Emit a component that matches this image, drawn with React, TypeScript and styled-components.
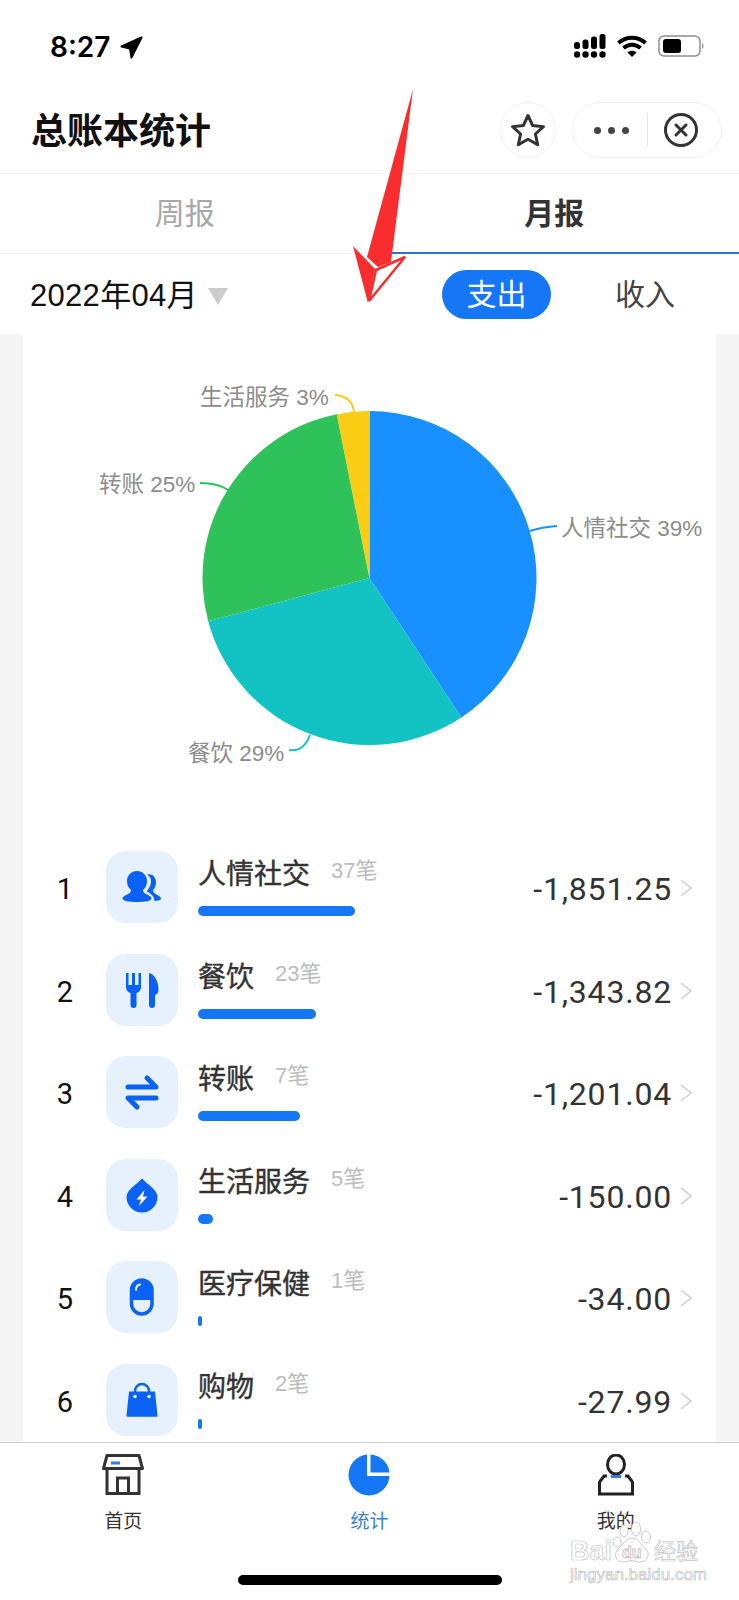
import styled, { createGlobalStyle } from 'styled-components';

const CJK = `"Liberation Sans", "Noto Sans CJK SC", sans-serif`;
const BLUE = '#1677f6';
const ICON_BLUE = '#0a62f5';

const GlobalStyle = createGlobalStyle`
  html, body {
    margin: 0;
    padding: 0;
    background: #fff;
  }
  * {
    box-sizing: border-box;
  }
`;

const Page = styled.div`
  position: relative;
  width: 739px;
  height: 1600px;
  overflow: hidden;
  display: flex;
  flex-direction: column;
  background: #fff;
  font-family: ${CJK};
`;

const StatusBar = styled.div`
  height: 88px;
  flex: none;
  display: flex;
  justify-content: space-between;
  align-items: flex-start;
  padding: 32px 34px 0 50px;
`;

const TimeBox = styled.div`
  display: flex;
  align-items: center;
  gap: 10px;
  height: 30px;
  font-family: Inter, sans-serif;
  font-size: 28px;
  font-weight: 600;
  color: #000;
`;

const StatusIcons = styled.div`
  display: flex;
  align-items: center;
  gap: 11px;
  margin-top: 2px;
`;

const NavBar = styled.div`
  height: 86px;
  flex: none;
  display: flex;
  align-items: flex-start;
  padding: 14px 17px 0 31px;
  border-bottom: 1px solid #f3f3f3;
`;

const Title = styled.div`
  flex: 1;
  margin-top: 2px;
  font-size: 36px;
  line-height: 56px;
  font-weight: 700;
  color: #111;
`;

const RoundButton = styled.div`
  width: 56px;
  height: 56px;
  border-radius: 50%;
  border: 1px solid #f0f0f0;
  display: flex;
  align-items: center;
  justify-content: center;
`;

const Capsule = styled.div`
  width: 150px;
  height: 56px;
  margin-left: 16px;
  border-radius: 28px;
  border: 1px solid #f0f0f0;
  display: flex;
  align-items: center;
`;

const CapsuleDots = styled.div`
  width: 75px;
  height: 34px;
  display: flex;
  align-items: center;
  justify-content: center;
  border-right: 1px solid #e4e4e4;
  gap: 7px;
  padding-left: 2px;
`;

const Dot = styled.span`
  width: 7px;
  height: 7px;
  border-radius: 50%;
  background: #444;
`;

const CapsuleClose = styled.div`
  flex: 1;
  display: flex;
  justify-content: center;
  padding-right: 7px;
`;

const Tabs = styled.div`
  height: 80px;
  flex: none;
  display: flex;
  border-bottom: 1px solid #f3f3f3;
`;

const Tab = styled.div<{ $active?: boolean }>`
  position: relative;
  flex: 1;
  display: flex;
  align-items: center;
  justify-content: center;
  padding-bottom: 6px;
  font-size: 30px;
  font-weight: ${(p) => (p.$active ? 700 : 400)};
  color: ${(p) => (p.$active ? '#333' : '#a8a8a8')};

  ${(p) =>
    p.$active &&
    `&::after {
      content: '';
      position: absolute;
      left: 0;
      right: 0;
      bottom: -1px;
      height: 2px;
      background: #2f73cf;
    }`}
`;

const FilterRow = styled.div`
  height: 80px;
  flex: none;
  display: flex;
  align-items: center;
  padding: 0 64px 0 30px;
`;

const DateLabel = styled.div`
  margin-top: -4px;
  font-size: 31px;
  letter-spacing: 0.3px;
  color: #111;
`;

const Caret = styled.div`
  width: 0;
  height: 0;
  margin: 4px 0 0 10px;
  border-left: 10px solid transparent;
  border-right: 10px solid transparent;
  border-top: 17px solid #cccccc;
`;

const TypeSwitch = styled.div`
  margin-left: auto;
  display: flex;
  align-items: center;
  gap: 64px;
`;

const TypeButton = styled.div<{ $active?: boolean }>`
  width: ${(p) => (p.$active ? '109px' : 'auto')};
  height: 49px;
  padding-bottom: 5px;
  border-radius: 25px;
  display: flex;
  align-items: center;
  justify-content: center;
  font-size: 30px;
  background: ${(p) => (p.$active ? BLUE : 'transparent')};
  color: ${(p) => (p.$active ? '#fff' : '#444')};
`;

const Main = styled.div`
  flex: 1;
  min-height: 0;
  overflow: hidden;
  background: #f5f5f5;
  padding: 0 23px;
`;

const Card = styled.div`
  background: #fff;
  min-height: 100%;
`;

const ChartSvg = styled.svg`
  display: block;
  width: 693px;
  height: 500px;

  text {
    font-family: ${CJK};
    font-size: 22.5px;
    fill: #8c8c8c;
  }
`;

const List = styled.div`
  display: flex;
  flex-direction: column;
  gap: 30.5px;
  padding: 17px 24px 0 25px;
`;

const Row = styled.div`
  display: flex;
  align-items: flex-start;
  height: 72px;
`;

const Rank = styled.div`
  width: 34px;
  line-height: 76px;
  text-align: center;
  font-family: Roboto, sans-serif;
  font-size: 29px;
  color: #111;
`;

const IconTile = styled.div`
  width: 72px;
  height: 72px;
  margin-left: 24px;
  border-radius: 20px;
  background: #e6f1fd;
  display: flex;
`;

const Info = styled.div`
  flex: 1;
  margin-left: 20px;
  padding-top: 1px;
`;

const NameLine = styled.div`
  display: flex;
  align-items: center;
  gap: 21px;
  height: 40px;
`;

const Name = styled.div`
  font-size: 28px;
  font-weight: 400;
  -webkit-text-stroke: 0.4px #333;
  color: #333;
`;

const Count = styled.div`
  margin-top: -8px;
  font-size: 22px;
  color: #bdbdbd;
`;

const Bar = styled.div`
  height: 10px;
  margin-top: 14px;
  border-radius: 5px;
  background: ${BLUE};
`;

const Amount = styled.div`
  line-height: 76px;
  font-family: Roboto, sans-serif;
  font-size: 32px;
  letter-spacing: 0.8px;
  color: #333;
`;

const Chevron = styled.svg`
  width: 12px;
  height: 18px;
  margin: 28px 0 0 8px;
`;

const TabBar = styled.div`
  flex: none;
  height: 158px;
  border-top: 1px solid #cccccc;
  background: #fff;
  display: flex;
  flex-direction: column;
`;

const TabItems = styled.div`
  display: grid;
  grid-template-columns: repeat(3, 1fr);
  padding-top: 11px;
`;

const TabItem = styled.div<{ $active?: boolean }>`
  display: flex;
  flex-direction: column;
  align-items: center;
  font-size: 19px;
  line-height: 26px;
  color: ${(p) => (p.$active ? '#3a7fd5' : '#333')};

  svg {
    display: block;
    width: 44px;
    height: 42px;
    margin-bottom: 13px;
  }
`;

const TabLabel = styled.span`
  display: block;
`;

const HomeIndicator = styled.div`
  width: 264px;
  height: 10px;
  margin-top: 40px;
  align-self: center;
  border-radius: 5px;
  background: #000;
`;

const Annotation = styled.svg`
  position: absolute;
  left: 340px;
  top: 80px;
  width: 80px;
  height: 230px;
  pointer-events: none;
`;

const Watermark = styled.div`
  position: absolute;
  left: 570px;
  top: 1520px;
  width: 130px;
  height: 64px;
  color: #fff;
  -webkit-text-stroke: 0.7px #c4c4c4;
  pointer-events: none;
`;

const WatermarkBai = styled.span`
  position: absolute;
  left: 0;
  top: 18px;
  font-size: 27px;
  line-height: 27px;
  font-weight: 700;
`;

const WatermarkJy = styled.span`
  position: absolute;
  left: 84px;
  top: 20px;
  font-size: 22px;
  line-height: 24px;
  white-space: nowrap;
`;

const WatermarkUrl = styled.span`
  position: absolute;
  left: 0;
  top: 46px;
  font-size: 17px;
  line-height: 17px;
  white-space: nowrap;
`;

const WatermarkPaw = styled.svg`
  position: absolute;
  left: 42px;
  top: 2px;
  width: 40px;
  height: 44px;

  ellipse, path {
    fill: #fff;
    stroke: #c9c9c9;
    stroke-width: 1;
  }
  text {
    font-family: "Liberation Sans", sans-serif;
    font-size: 16px;
    font-weight: 700;
    fill: #fff;
    stroke: #c0c0c0;
    stroke-width: 0.8;
  }
`;

// pie is drawn in page coordinates, viewBox of ChartSvg starts at 23,334
const CX = 369.5;
const CY = 578;
const R = 167;

const point = (deg: number) => {
  const a = (deg * Math.PI) / 180;
  return `${CX + R * Math.sin(a)} ${CY - R * Math.cos(a)}`;
};

const slices = [
  { from: 0, to: 146.6, color: '#1890ff' },
  { from: 146.6, to: 255, color: '#13c2c2' },
  { from: 255, to: 348.7, color: '#2fc25b' },
  { from: 348.7, to: 360, color: '#facc14' },
];

const PeopleIcon = () => (
  <svg width="72" height="72" viewBox="0 0 72 72" fill={ICON_BLUE}>
    <path d="M31 20C25 20 21 24.500 21 30C21 34 22.500 37 25 39C25 41 24 42 21 43.500C18 45 16.500 46 16.500 47.500C16.500 50 23 51 31 51C39 51 45.500 50 45.500 47.500C45.500 46 44 45 41 43.500C38 42 37 41 37 39C39.500 37 41 34 41 30C41 24.500 37 20 31 20Z" />
    <path d="M41 23.500C46 22 50 26 50 31C50 35 48.500 37.500 47 39C47 41 48 42 50.500 43.500C53 45 55 46 55 47.500C55 49 52 50 48.500 50C48.500 46 46 43.500 42 41C41 40.500 41 40 41 39.500C43.500 37 45 34 45 30C45 27 43.500 25 41 23.500Z" />
  </svg>
);

const ForkKnifeIcon = () => (
  <svg width="72" height="72" viewBox="0 0 72 72" fill={ICON_BLUE}>
    <path d="M20 19h2.500v12h3.500V19h3v12h3.500V19H35v14c0 3-2 5.500-4.500 6V51a3 3 0 0 1-6 0V39c-2.500-.5-4.500-3-4.500-6z" />
    <path d="M43 19C49 20 52.500 28 52.500 36C52.500 39 50.500 40.500 49 41V51a3 3 0 0 1-6 0Z" />
  </svg>
);

const TransferIcon = () => (
  <svg width="72" height="72" viewBox="0 0 72 72" fill="none" stroke={ICON_BLUE} strokeWidth="5" strokeLinecap="round" strokeLinejoin="round">
    <path d="M22 31H50L41 22" />
    <path d="M50 42H22L31 51" />
  </svg>
);

const DropIcon = () => (
  <svg width="72" height="72" viewBox="0 0 72 72">
    <path fill={ICON_BLUE} d="M36 19.500C42 26 51.500 31 51.500 38A15.500 15.500 0 0 1 20.500 38C20.500 31 30 26 36 19.500Z" />
    <path fill="#fff" d="M38.500 31L30.500 40.500h4.500l-2 6.500l8.500-9.500h-4.500l1.500-6.500z" />
  </svg>
);

const PillIcon = () => (
  <svg width="72" height="72" viewBox="0 0 72 72">
    <path fill={ICON_BLUE} d="M25.500 39V29.300A10.250 10.250 0 0 1 46 29.300V39Z" />
    <rect x="25.500" y="19" width="20.500" height="34" rx="10.250" fill="none" stroke={ICON_BLUE} strokeWidth="3.500" />
    <path d="M30 29c0-3 1.500-5 4-5.500" fill="none" stroke="#e6f1fd" strokeWidth="2" strokeLinecap="round" />
  </svg>
);

const BagIcon = () => (
  <svg width="72" height="72" viewBox="0 0 72 72">
    <path d="M29 33v-6a7 7 0 0 1 14 0v6" fill="none" stroke={ICON_BLUE} strokeWidth="2.500" />
    <path fill={ICON_BLUE} d="M23 27.500H49L51.500 51.500a1 1 0 0 1-1 1.200H21.500a1 1 0 0 1-1-1.200Z" />
    <circle cx="29" cy="32.500" r="1.800" fill="#e6f1fd" />
    <circle cx="43" cy="32.500" r="1.800" fill="#e6f1fd" />
  </svg>
);

const rows = [
  { name: '人情社交', count: '37笔', amount: '-1,851.25', width: 157, Icon: PeopleIcon },
  { name: '餐饮', count: '23笔', amount: '-1,343.82', width: 118, Icon: ForkKnifeIcon },
  { name: '转账', count: '7笔', amount: '-1,201.04', width: 102, Icon: TransferIcon },
  { name: '生活服务', count: '5笔', amount: '-150.00', width: 15, Icon: DropIcon },
  { name: '医疗保健', count: '1笔', amount: '-34.00', width: 4, Icon: PillIcon },
  { name: '购物', count: '2笔', amount: '-27.99', width: 4, Icon: BagIcon },
];

const SignalIcon = () => (
  <svg width="32" height="24" viewBox="0 0 32 24" fill="#000">
    <rect x="0" y="8" width="6" height="7" rx="2.500" />
    <rect x="8.500" y="5.500" width="6" height="9.500" rx="2.500" />
    <rect x="17" y="2.500" width="6" height="12.500" rx="2.500" />
    <rect x="25.500" y="0" width="6" height="15" rx="2.500" />
    <circle cx="3" cy="20.500" r="3.200" />
    <circle cx="11.500" cy="20.500" r="3.200" />
    <circle cx="20" cy="20.500" r="3.200" />
    <circle cx="28.500" cy="20.500" r="3.200" />
  </svg>
);

const WifiIcon = () => (
  <svg width="30" height="22" viewBox="0 0 30 22" fill="none" stroke="#000" strokeWidth="4">
    <path d="M1.500 8C9 1 21 1 28.500 8" />
    <path d="M6.500 13C11.500 8.500 18.500 8.500 23.500 13" />
    <path d="M15 22L10.500 17.500C13 15 17 15 19.500 17.500Z" fill="#000" stroke="none" />
  </svg>
);

const BatteryIcon = () => (
  <svg width="47" height="22" viewBox="0 0 47 22">
    <rect x="1" y="1" width="41" height="20" rx="5" fill="none" stroke="#8f8f8f" strokeWidth="1.500" />
    <rect x="5" y="4" width="18" height="14" rx="3" fill="#000" />
    <path d="M44 8c2 .5 2 5.500 0 6z" fill="#9a9a9a" />
  </svg>
);

export default function App() {
  return (
    <Page>
      <GlobalStyle />
      <StatusBar>
        <TimeBox>
          8:27
          <svg width="23" height="23" viewBox="0 0 23 23" fill="#000" stroke="#000" strokeWidth="2" strokeLinejoin="round">
            <path d="M21.500 1.500L1.500 10.500L10 12.500L11.500 21.500Z" />
          </svg>
        </TimeBox>
        <StatusIcons>
          <SignalIcon />
          <WifiIcon />
          <BatteryIcon />
        </StatusIcons>
      </StatusBar>

      <NavBar>
        <Title>总账本统计</Title>
        <RoundButton>
          <svg width="36" height="34" viewBox="0 0 36 34" fill="none" stroke="#333" strokeWidth="3" strokeLinejoin="round">
            <path d="M18 2.500L22.600 12.500L33.500 13.700L25.400 21L27.700 31.700L18 26.300L8.300 31.700L10.600 21L2.500 13.700L13.400 12.500Z" />
          </svg>
        </RoundButton>
        <Capsule>
          <CapsuleDots>
            <Dot />
            <Dot />
            <Dot />
          </CapsuleDots>
          <CapsuleClose>
            <svg width="36" height="36" viewBox="0 0 36 36" fill="none" stroke="#333">
              <circle cx="18" cy="18" r="15.500" strokeWidth="3" />
              <path d="M13 13L23 23M23 13L13 23" strokeWidth="3" strokeLinecap="round" />
            </svg>
          </CapsuleClose>
        </Capsule>
      </NavBar>

      <Tabs>
        <Tab>周报</Tab>
        <Tab $active>月报</Tab>
      </Tabs>

      <FilterRow>
        <DateLabel>2022年04月</DateLabel>
        <Caret />
        <TypeSwitch>
          <TypeButton $active>支出</TypeButton>
          <TypeButton>收入</TypeButton>
        </TypeSwitch>
      </FilterRow>

      <Main>
        <Card>
          <ChartSvg viewBox="23 334 693 500">
            {slices.map((s) => (
              <path
                key={s.color}
                fill={s.color}
                d={`M${CX} ${CY}L${point(s.from)}A${R} ${R} 0 ${s.to - s.from > 180 ? 1 : 0} 1 ${point(s.to)}Z`}
              />
            ))}
            <g fill="none" strokeWidth="2">
              <path stroke="#1890ff" d="M530 531Q542 527 557 526" />
              <path stroke="#facc14" d="M354 412Q352 396 335 395" />
              <path stroke="#2fc25b" d="M228 490Q218 483 200 483" />
              <path stroke="#13c2c2" d="M310 735Q304 752 289 750" />
            </g>
            <text x="561" y="536">人情社交 39%</text>
            <text x="200" y="405">生活服务 3%</text>
            <text x="99" y="492">转账 25%</text>
            <text x="188" y="761">餐饮 29%</text>
          </ChartSvg>

          <List>
            {rows.map((r, i) => (
              <Row key={r.name}>
                <Rank>{i + 1}</Rank>
                <IconTile>
                  <r.Icon />
                </IconTile>
                <Info>
                  <NameLine>
                    <Name>{r.name}</Name>
                    <Count>{r.count}</Count>
                  </NameLine>
                  <Bar style={{ width: r.width }} />
                </Info>
                <Amount>{r.amount}</Amount>
                <Chevron viewBox="0 0 12 18" fill="none" stroke="#cfcfcf" strokeWidth="1.500">
                  <path d="M1 1L11 9L1 17" />
                </Chevron>
              </Row>
            ))}
          </List>
        </Card>
      </Main>

      <TabBar>
        <TabItems>
          <TabItem>
            <svg viewBox="0 0 44 42" fill="none" stroke="#333" strokeWidth="3">
              <path d="M6 1.500H38L41.500 14.500H2.500Z" strokeLinejoin="round" />
              <path d="M6 14.500V39.500H38V14.500" />
              <path d="M16.500 39.500V24H27.500V39.500" />
              <path d="M10 9H19" stroke="#2f7fdc" />
            </svg>
            <TabLabel>首页</TabLabel>
          </TabItem>
          <TabItem $active>
            <svg viewBox="0 0 44 42">
              <path fill={BLUE} d="M20 0.500A20.500 20.500 0 1 0 42.500 22H20Z" />
              <path fill={BLUE} d="M23.500 0.500A20.500 20.500 0 0 1 42.500 18.500H23.500Z" />
            </svg>
            <TabLabel>统计</TabLabel>
          </TabItem>
          <TabItem>
            <svg viewBox="0 0 44 42" fill="none" stroke="#222" strokeWidth="3">
              <ellipse cx="22" cy="10.500" rx="8.500" ry="9.500" />
              <path d="M13 22H10L5.500 28V40H38.500V28L34 22H31" />
              <path d="M17 22.500H27" stroke="#2f7fdc" />
            </svg>
            <TabLabel>我的</TabLabel>
          </TabItem>
        </TabItems>
        <HomeIndicator />
      </TabBar>

      <Annotation viewBox="340 80 80 230">
        <path fill="#f92d2d" d="M413 89L367 257L378 267L391 262Z" />
        <path fill="#f92d2d" d="M353 246L375 269L368 303Z" />
        <path fill="#fff" stroke="#f92d2d" strokeWidth="2.500" d="M405 257L376 270L369 301Z" />
      </Annotation>

      <Watermark>
        <WatermarkBai>Bai</WatermarkBai>
        <WatermarkPaw viewBox="0 0 40 44">
          <ellipse cx="12" cy="9" rx="4" ry="6" />
          <ellipse cx="24" cy="7" rx="4.500" ry="7" />
          <ellipse cx="34" cy="15" rx="4.500" ry="6" />
          <ellipse cx="5" cy="20" rx="4" ry="5" />
          <path d="M20 16C26 16 28 22 33 26C39 31 36 40 28 40C24 40 22 38.500 20 38.500C17 38.500 15 40 11 40C3 40 1 31 7 26C12 22 14 16 20 16Z" />
          <text x="10" y="36">du</text>
        </WatermarkPaw>
        <WatermarkJy>经验</WatermarkJy>
        <WatermarkUrl>jingyan.baidu.com</WatermarkUrl>
      </Watermark>
    </Page>
  );
}
